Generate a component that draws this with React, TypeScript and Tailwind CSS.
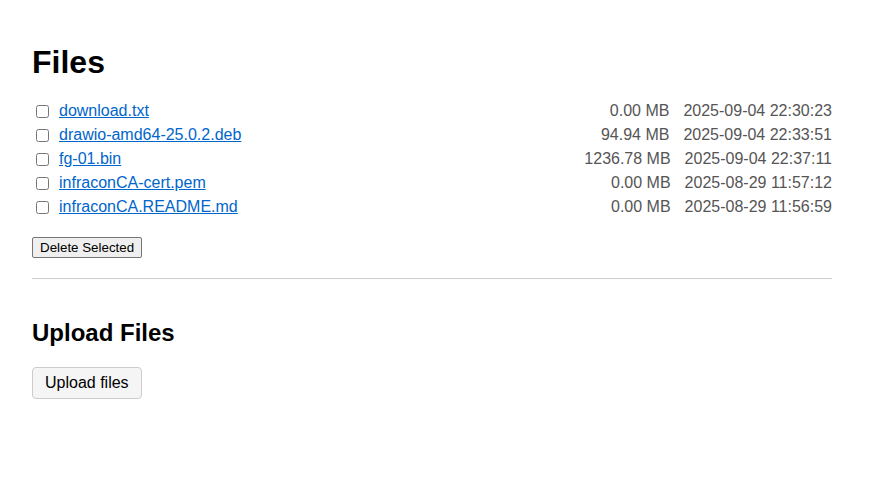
import { useState } from 'react';

interface FileEntry {
  name: string;
  size: string;
  modified: string;
}

const files: FileEntry[] = [
  { name: 'download.txt', size: '0.00 MB', modified: '2025-09-04 22:30:23' },
  { name: 'drawio-amd64-25.0.2.deb', size: '94.94 MB', modified: '2025-09-04 22:33:51' },
  { name: 'fg-01.bin', size: '1236.78 MB', modified: '2025-09-04 22:37:11' },
  { name: 'infraconCA-cert.pem', size: '0.00 MB', modified: '2025-08-29 11:57:12' },
  { name: 'infraconCA.README.md', size: '0.00 MB', modified: '2025-08-29 11:56:59' },
];

export default function App() {
  const [selected, setSelected] = useState<string[]>([]);

  const toggle = (name: string) => {
    setSelected((s) => (s.includes(name) ? s.filter((n) => n !== name) : [...s, name]));
  };

  return (
    <div className="min-h-[490px] bg-white px-8 pt-[44px] font-['Liberation_Sans',Arial,sans-serif] text-black">
      <div className="w-[800px]">
        <h1 className="text-[32px] font-bold leading-[37px]">Files</h1>

        <ul className="mt-[18px]">
          {files.map((f) => (
            <li key={f.name} className="flex h-6 items-center text-base">
              <input
                type="checkbox"
                className="ml-[4px] mr-[10px] h-[13px] w-[13px]"
                checked={selected.includes(f.name)}
                onChange={() => toggle(f.name)}
              />
              <a href="#" className="text-[#0066cc] underline">
                {f.name}
              </a>
              <span className="ml-auto text-[#555]">{f.size}</span>
              <span className="ml-[14px] text-[#555]">{f.modified}</span>
            </li>
          ))}
        </ul>

        <button className="mt-[18px] h-[21px] rounded-[2px] border border-[#767676] bg-[#efefef] px-[7px] text-[13.33px] leading-none">
          Delete Selected
        </button>

        <hr className="mt-[19px] border-t border-[#ccc]" />

        <h2 className="mt-[40px] text-2xl font-bold leading-[28px]">Upload Files</h2>

        <button className="mt-[20px] h-[32px] rounded border border-[#ccc] bg-[#f5f5f5] px-3 text-base">
          Upload files
        </button>
      </div>
    </div>
  );
}
